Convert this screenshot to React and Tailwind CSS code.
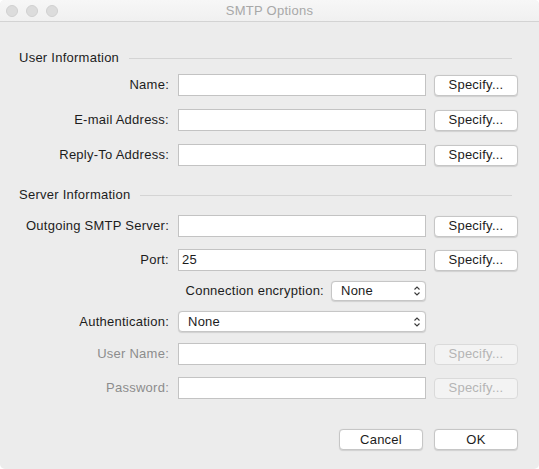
import React from 'react';

const FONT = { fontFamily: '"Liberation Sans", Arial, sans-serif' };

function Updown() {
  return (
    <svg width="8" height="12" viewBox="0 0 8 12" className="shrink-0">
      <path d="M1.5 4.5 L4 2 L6.5 4.5" fill="none" stroke="#3a3a3a" strokeWidth="1.1" />
      <path d="M1.5 7.5 L4 10 L6.5 7.5" fill="none" stroke="#3a3a3a" strokeWidth="1.1" />
    </svg>
  );
}

function Section({ title, className = '' }) {
  return (
    <div className={`flex items-center h-4 pl-[19px] pr-[27px] ${className}`}>
      <span className="text-[13px] text-[#1c1c1c]">{title}</span>
      <div className="flex-1 ml-[10px] h-px bg-[#d4d4d4]" />
    </div>
  );
}

function Button({ children, disabled, className = '' }) {
  return (
    <div
      className={`flex items-center justify-center w-[84px] h-[21px] rounded-[4px] border text-[13px] ${
        disabled
          ? 'bg-[#f3f3f3] border-[#dadada] text-[#b5b5b5]'
          : 'bg-white border-[#c6c6c6] text-[#1c1c1c] shadow-[0_0.5px_1px_rgba(0,0,0,0.12)]'
      } ${className}`}
    >
      {children}
    </div>
  );
}

function Row({ label, value = '', disabled, className = '' }) {
  return (
    <div className={`flex items-center h-[22px] ${className}`}>
      <div className={`w-[169px] text-right text-[13px] ${disabled ? 'text-[#8c8c8c]' : 'text-[#1c1c1c]'}`}>
        {label}
      </div>
      <div className="ml-[9px] w-[248px] h-[22px] bg-white border border-[#c3c3c3] flex items-center pl-[3px] text-[13px] text-[#1c1c1c]">
        {value}
      </div>
      <Button disabled={disabled} className="ml-[8px]">Specify...</Button>
    </div>
  );
}

function Select({ value, className = '' }) {
  return (
    <div
      className={`flex items-center justify-between h-[20px] pl-[9px] pr-[4px] rounded-[4px] bg-white border border-[#c6c6c6] shadow-[0_0.5px_1px_rgba(0,0,0,0.12)] text-[13px] text-[#1c1c1c] ${className}`}
    >
      <span>{value}</span>
      <Updown />
    </div>
  );
}

export default function App() {
  return (
    <div className="w-[539px] h-[469px] bg-white tracking-[0.25px]" style={FONT}>
      <div className="w-full h-full rounded-[5px] overflow-hidden bg-[#ececec] flex flex-col">
        {/* Title bar */}
        <div className="relative h-[22px] shrink-0 border-b border-[#d3d3d3] bg-gradient-to-b from-[#f7f7f7] to-[#f0f0f0] flex items-center justify-center">
          <div className="absolute left-[6px] top-[5px] flex gap-[8px]">
            <div className="w-[12px] h-[12px] rounded-full bg-[#dcdcdc] border border-[#d0d0d0]" />
            <div className="w-[12px] h-[12px] rounded-full bg-[#dcdcdc] border border-[#d0d0d0]" />
            <div className="w-[12px] h-[12px] rounded-full bg-[#dcdcdc] border border-[#d0d0d0]" />
          </div>
          <span className="text-[13px] text-[#a8a8a8]">SMTP Options</span>
        </div>

        <Section title="User Information" className="mt-[28px]" />
        <Row label="Name:" className="mt-[8px]" />
        <Row label="E-mail Address:" className="mt-[13px]" />
        <Row label="Reply-To Address:" className="mt-[13px]" />

        <Section title="Server Information" className="mt-[21px]" />
        <Row label="Outgoing SMTP Server:" className="mt-[12px]" />
        <Row label="Port:" value="25" className="mt-[12px]" />

        <div className="flex items-center justify-end w-[426px] mt-[10px]">
          <span className="text-[13px] text-[#1c1c1c] mr-[7px]">Connection encryption:</span>
          <Select value="None" className="w-[95px]" />
        </div>

        <div className="flex items-center mt-[10px] h-[21px]">
          <div className="w-[169px] text-right text-[13px] text-[#1c1c1c]">Authentication:</div>
          <Select value="None" className="ml-[9px] w-[248px] h-[21px]" />
        </div>

        <Row label="User Name:" disabled className="mt-[11px]" />
        <Row label="Password:" disabled className="mt-[12px]" />

        <div className="flex justify-end pr-[21px] mt-[30px] gap-[11px]">
          <Button>Cancel</Button>
          <Button>OK</Button>
        </div>
      </div>
    </div>
  );
}
